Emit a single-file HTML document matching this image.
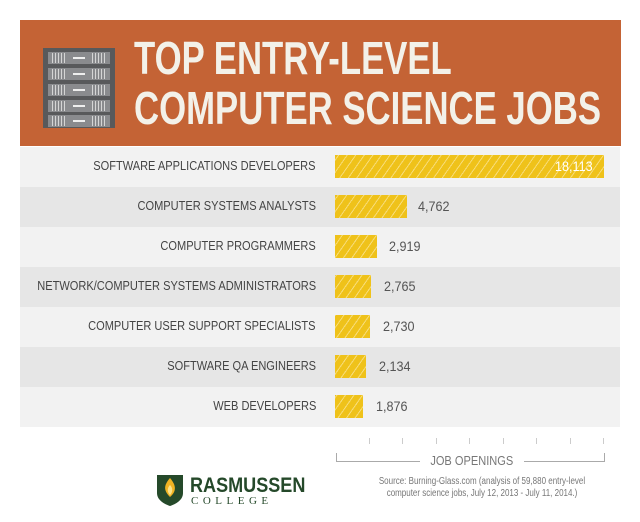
<!DOCTYPE html>
<html><head><style>
body{margin:0;width:640px;height:522px;background:#fff;position:relative;overflow:hidden;font-family:"Liberation Sans",sans-serif}
.banner{position:absolute;left:20px;top:20px;width:601px;height:126px;background:#c46335}
.title{position:absolute;left:134px;top:33px;color:#f3f1e9;font:bold 46px/50px "Liberation Sans Narrow","Liberation Sans",sans-serif;transform:scaleX(0.755);transform-origin:0 0;white-space:nowrap}
.srv{position:absolute;left:43px;top:48px;width:72px;height:80px;background:#58595b}
.srv div{position:absolute;left:5px;width:62px;height:12px;background:#8a8b8e;
background-image:repeating-linear-gradient(90deg,#d5d5d5 0 1px,transparent 1px 3px);background-size:14px 10px;background-repeat:no-repeat;background-position:4px 1px}
.srv div:after{content:"";position:absolute;right:4px;top:1px;width:14px;height:10px;background:repeating-linear-gradient(90deg,#d5d5d5 0 1px,transparent 1px 3px)}
.srv div:before{content:"";position:absolute;left:25px;top:5px;width:12px;height:2px;background:#eee}
.row{position:absolute;left:20px;width:600px;height:40px}
.lab{position:absolute;right:304px;top:11px;font-size:13px;color:#444;white-space:nowrap;transform:scaleX(0.85);transform-origin:100% 0}
.bar{position:absolute;left:315px;top:8px;height:23px;background:#efc21a repeating-linear-gradient(-55deg,#efc21a 0 6px,#f7dc78 6px 7px)}
.val{position:absolute;top:11px;font-size:14px;color:#555;transform:scaleX(0.9);transform-origin:0 0}
.tick{position:absolute;top:438px;width:1px;height:6px;background:#ccc}
</style></head><body>
<div class="banner"></div>
<div class="srv"><div style="top:4px"></div><div style="top:20px"></div><div style="top:36px"></div><div style="top:52px"></div><div style="top:67px"></div></div>
<div class="title">TOP ENTRY-LEVEL<br>COMPUTER SCIENCE JOBS</div>

<div class="row" style="top:147px;background:#f2f2f2"><span class="lab">SOFTWARE APPLICATIONS DEVELOPERS</span><div class="bar" style="width:269px"></div><span class="val" style="left:535px;color:#fff">18,113</span></div>
<div class="row" style="top:187px;background:#e6e6e6"><span class="lab">COMPUTER SYSTEMS ANALYSTS</span><div class="bar" style="width:72px"></div><span class="val" style="left:398px">4,762</span></div>
<div class="row" style="top:227px;background:#f2f2f2"><span class="lab">COMPUTER PROGRAMMERS</span><div class="bar" style="width:42px"></div><span class="val" style="left:369px">2,919</span></div>
<div class="row" style="top:267px;background:#e6e6e6"><span class="lab">NETWORK/COMPUTER SYSTEMS ADMINISTRATORS</span><div class="bar" style="width:36px"></div><span class="val" style="left:364px">2,765</span></div>
<div class="row" style="top:307px;background:#f2f2f2"><span class="lab">COMPUTER USER SUPPORT SPECIALISTS</span><div class="bar" style="width:35px"></div><span class="val" style="left:363px">2,730</span></div>
<div class="row" style="top:347px;background:#e6e6e6"><span class="lab">SOFTWARE QA ENGINEERS</span><div class="bar" style="width:31px"></div><span class="val" style="left:359px">2,134</span></div>
<div class="row" style="top:387px;background:#f2f2f2;height:40px"><span class="lab">WEB DEVELOPERS</span><div class="bar" style="width:28px"></div><span class="val" style="left:356px">1,876</span></div>

<div class="tick" style="left:369px"></div><div class="tick" style="left:402px"></div><div class="tick" style="left:436px"></div><div class="tick" style="left:469px"></div><div class="tick" style="left:503px"></div><div class="tick" style="left:536px"></div><div class="tick" style="left:570px"></div><div class="tick" style="left:603px"></div>
<div style="position:absolute;left:336px;top:453px;width:267px;height:8px;border:1px solid #aaa;border-top:none"></div>
<div style="position:absolute;left:420px;top:453px;width:104px;text-align:center;background:#fff;font-size:13px;color:#777;white-space:nowrap"><span style="display:inline-block;transform:scaleX(0.85)">JOB OPENINGS</span></div>
<div style="position:absolute;left:352px;top:476px;width:260px;text-align:center;font-size:10px;line-height:12px;color:#777;white-space:nowrap;transform:scaleX(0.8)">Source: Burning-Glass.com (analysis of 59,880 entry-level<br>computer science jobs, July 12, 2013 - July 11, 2014.)</div>

<svg style="position:absolute;left:156px;top:473px" width="28" height="34" viewBox="0 0 28 34"><path d="M1 2h26v18c0 7-7 11-13 13C8 31 1 27 1 20z" fill="#25492a"/><path d="M14 5c-6 7-7 12 0 19c7-6 6-12 0-19z" fill="#f0b323"/><path d="M14 12c-3 3-3 7 0 10c3-3 3-7 0-10z" fill="#fce28a"/></svg>
<div style="position:absolute;left:190px;top:475px;font:bold 21px/22px 'Liberation Sans',sans-serif;color:#25492a;transform:scaleX(0.86);transform-origin:0 0">RASMUSSEN</div>
<div style="position:absolute;left:191px;top:495px;font:11px/12px 'Liberation Serif',serif;color:#25492a;letter-spacing:4.5px">COLLEGE</div>
</body></html>
